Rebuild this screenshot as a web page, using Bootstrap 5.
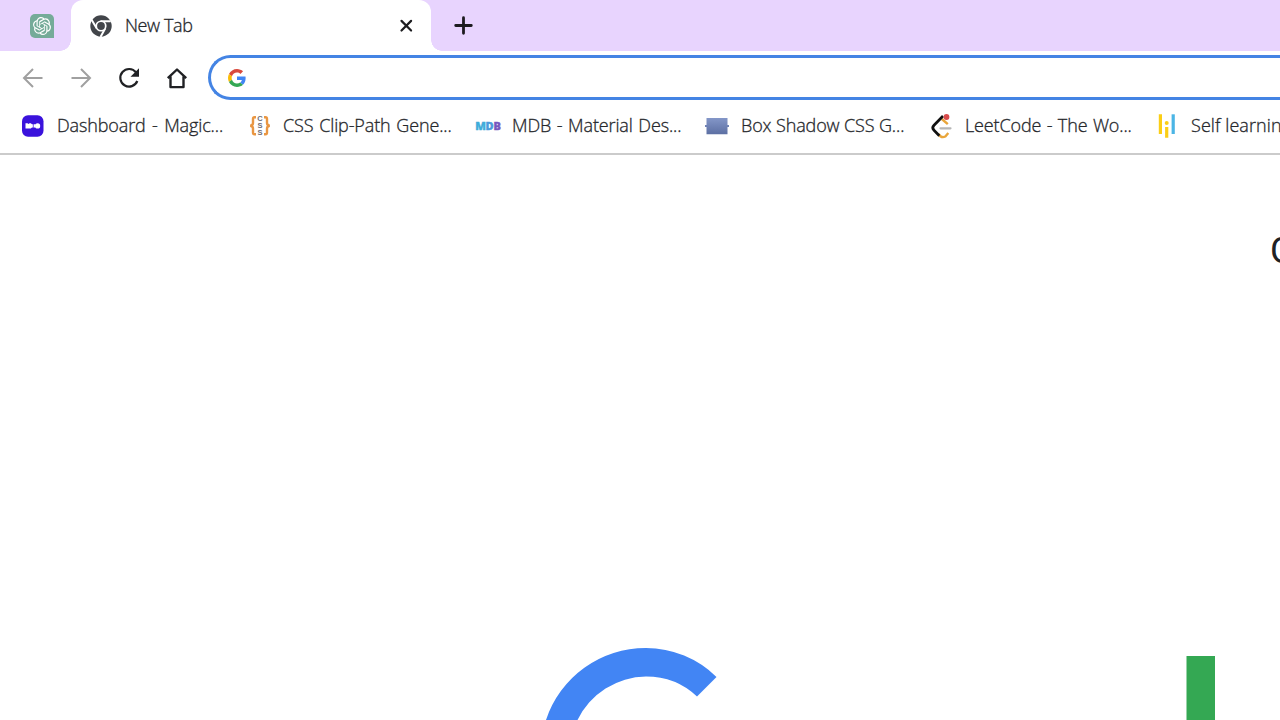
<!DOCTYPE html>
<html lang="en">
<head>
<meta charset="utf-8">
<meta name="viewport" content="width=device-width, initial-scale=1">
<title>New Tab</title>
<link href="https://cdn.jsdelivr.net/npm/bootstrap@5.3.0/dist/css/bootstrap.min.css" rel="stylesheet">
<style>
body{height:720px;font-family:"Open Sans","Noto Sans",sans-serif;font-size:18px;font-weight:300;color:#25272b;background:#fff}
svg{display:block;flex:none;overflow:visible}
.tabstrip{height:51px;background:#e8d4fe}
.pinned{width:71px;padding-left:30px}
.active-tab{width:360px;height:51px;background:#fff;border-radius:12px 12px 0 0;padding:0 18px 0 19px}
.active-tab::before,.active-tab::after{content:"";position:absolute;bottom:0;width:11px;height:11px}
.active-tab::before{left:-11px;background:radial-gradient(circle at 0 0,transparent 10.5px,#fff 11px)}
.active-tab::after{right:-11px;background:radial-gradient(circle at 100% 0,transparent 10.5px,#fff 11px)}
.tab-title{margin-left:13px;letter-spacing:-.4px;-webkit-text-stroke:.3px #25272b}
.toolbar{height:53px;padding-left:21px}
.tool{width:24px;height:24px;margin-right:24px}
.tool-last{margin-right:19px}
.omnibox{height:45px;border:3px solid #4484e4;border-right:0;border-radius:23px 0 0 23px;padding-left:17px}
.bookmarks{height:51px;padding:0 0 6px 22px;border-bottom:2px solid #cbcbcb}
.bm{flex:none}
.bm span{line-height:22px;padding-bottom:2px;letter-spacing:-.13px;-webkit-text-stroke:.3px #25272b}
.bm svg{margin-right:13px}
.b1{width:226px}.b2{width:229px}.b3{width:229px}.b4{width:224px}.b5{width:226px}
.b1 span{word-spacing:1.9px}.b2 span{word-spacing:1.2px}.b3 span{word-spacing:1.1px}.b4 span{word-spacing:0}.b5 span{word-spacing:.9px}
.b6 span{letter-spacing:.08px}
.mail{padding:72px 0 0 1270px;font:36px/48px Roboto,sans-serif;color:#202124;height:493px}
.logo{padding-left:541px}
</style>
</head>
<body class="overflow-hidden d-flex flex-column">
<header class="tabstrip d-flex align-items-center flex-shrink-0">
  <div class="pinned flex-shrink-0">
    <svg width="24" height="24" viewBox="0 0 24 24"><path d="M5 0h14a5 5 0 0 1 5 5v19H5a5 5 0 0 1-5-5V5a5 5 0 0 1 5-5Z" fill="#75ab99"/><path transform="translate(3 3) scale(.75)" fill="#fff" d="M22.2819 9.8211a5.9847 5.9847 0 0 0-.5157-4.9108 6.0462 6.0462 0 0 0-6.5098-2.9A6.0651 6.0651 0 0 0 4.9807 4.1818a5.9847 5.9847 0 0 0-3.9977 2.9 6.0462 6.0462 0 0 0 .7427 7.0966 5.98 5.98 0 0 0 .511 4.9107 6.051 6.051 0 0 0 6.5146 2.9001A5.9847 5.9847 0 0 0 13.2599 24a6.0557 6.0557 0 0 0 5.7718-4.2058 5.9894 5.9894 0 0 0 3.9977-2.9001 6.0557 6.0557 0 0 0-.7475-7.073zM13.2599 22.4292a4.4755 4.4755 0 0 1-2.8764-1.0408l.1419-.0804 4.7783-2.7582a.7948.7948 0 0 0 .3927-.6813v-6.7369l2.02 1.1686a.071.071 0 0 1 .038.052v5.5826a4.504 4.504 0 0 1-4.4945 4.4944zM3.5992 18.304a4.4708 4.4708 0 0 1-.5346-3.0137l.142.0852 4.783 2.7582a.7712.7712 0 0 0 .7806 0l5.8428-3.3685v2.3324a.0804.0804 0 0 1-.0332.0615L9.74 19.9502a4.4992 4.4992 0 0 1-6.1408-1.6464zM2.3408 7.8956a4.485 4.485 0 0 1 2.3655-1.9728V11.6a.7664.7664 0 0 0 .3879.6765l5.8144 3.3543-2.0201 1.1685a.0757.0757 0 0 1-.071 0l-4.8303-2.7865A4.504 4.504 0 0 1 2.3408 7.872zm16.5963 3.8558L13.1038 8.364 15.1192 7.2a.0757.0757 0 0 1 .071 0l4.8303 2.7913a4.4944 4.4944 0 0 1-.6765 8.1042v-5.6772a.79.79 0 0 0-.407-.667zm2.0107-3.0231l-.142-.0852-4.7735-2.7818a.7759.7759 0 0 0-.7854 0L9.409 9.2297V6.8974a.0662.0662 0 0 1 .0284-.0615l4.8303-2.7866a4.4992 4.4992 0 0 1 6.6802 4.66zM8.3065 12.863l-2.02-1.1638a.0804.0804 0 0 1-.038-.0567V6.0742a4.4992 4.4992 0 0 1 7.3757-3.4537l-.142.0805L8.704 5.459a.7948.7948 0 0 0-.3927.6813zm1.0976-2.3654l2.602-1.4998 2.6069 1.4998v2.9994l-2.5974 1.4997-2.6067-1.4997Z"/></svg>
  </div>
  <div class="active-tab position-relative d-flex align-items-center flex-shrink-0">
    <svg width="22" height="22" viewBox="0 0 22 22"><circle cx="11" cy="11" r="10.7" fill="#42454a"/><circle cx="11" cy="11" r="5.600" fill="#fff"/><path d="M10.500 6.300H20.800M6.800 13.500 1.600 4.700M15.300 13.300 10.500 22" stroke="#fff" stroke-width="2" fill="none"/><circle cx="11" cy="11" r="3.900" fill="#42454a"/></svg>
    <span class="tab-title">New Tab</span>
    <svg class="ms-auto" width="14" height="14" viewBox="0 0 14 14"><path d="m2.500 1.900 9.600 9.600m0-9.600-9.600 9.600" stroke="#1d1d20" stroke-width="2.200" stroke-linecap="round"/></svg>
  </div>
  <svg class="ms-4" width="18" height="18" viewBox="0 0 18 18"><path d="M8.500 .7v15.600M.7 8.500h15.600" stroke="#1d1b20" stroke-width="2.800" stroke-linecap="round"/></svg>
</header>
<nav class="toolbar d-flex align-items-center flex-shrink-0">
  <svg class="tool" viewBox="0 0 24 24"><path d="M21.500 12H3M12 3l-9 9 9 9" fill="none" stroke="#a0a0a0" stroke-width="2"/></svg>
  <svg class="tool" viewBox="0 0 24 24"><path d="M2.500 12H21M12 3l9 9-9 9" fill="none" stroke="#a0a0a0" stroke-width="2"/></svg>
  <svg class="tool" viewBox="0 0 24 24"><path d="M19 6.300A8.800 8.800 0 1 0 20.300 15" fill="none" stroke="#202124" stroke-width="2.200"/><path d="M22 2.300v8.500h-8.500Z" fill="#202124"/></svg>
  <svg class="tool tool-last" viewBox="0 0 24 24"><path d="M2.800 12.200 12 3.500l9.200 8.700M5.500 10.500v10.600h13V10.500" fill="none" stroke="#202124" stroke-width="2.400" stroke-linejoin="round"/></svg>
  <div class="omnibox d-flex align-items-center flex-grow-1">
    <svg width="18" height="18" viewBox="0 0 48 48"><path fill="#d94a3d" d="M24 9.5c3.54 0 6.71 1.22 9.21 3.6l6.85-6.85C35.9 2.38 30.47 0 24 0 14.62 0 6.51 5.38 2.56 13.22l7.98 6.19C12.43 13.72 17.74 9.5 24 9.5z"/><path fill="#4285f4" d="M46.98 24.55c0-1.57-.15-3.09-.38-4.55H24v9.02h12.94c-.58 2.96-2.26 5.48-4.78 7.18l7.73 6c4.51-4.18 7.09-10.36 7.09-17.65z"/><path fill="#fbbc05" d="M10.53 28.59A14.5 14.5 0 0 1 9.77 24c0-1.6.27-3.14.76-4.59l-7.98-6.19A24 24 0 0 0 0 24c0 3.88.92 7.54 2.56 10.78z"/><path fill="#34a853" d="M24 48c6.48 0 11.93-2.13 15.89-5.81l-7.73-6c-2.15 1.45-4.92 2.3-8.16 2.3-6.26 0-11.57-4.22-13.47-9.91l-7.98 6.19C6.51 42.62 14.62 48 24 48z"/></svg>
  </div>
</nav>
<div class="bookmarks d-flex align-items-center flex-shrink-0">
  <div class="bm b1 d-flex align-items-center"><svg width="22" height="22" viewBox="0 0 22 22"><rect y=".3" width="21.500" height="21.500" rx="6" fill="#3a12dc"/><path d="M3.500 8.200h2l1 .7 1-.7h1.300l1.200 1h3.500v3.300h-3.500l-1.200 1H3.500Z" fill="#fff"/><circle cx="15.600" cy="10.900" r="2.600" fill="#fff"/><path d="M11.300 9v3.800" stroke="#3a12dc" stroke-width=".7"/></svg><span>Dashboard - Magic...</span></div>
  <div class="bm b2 d-flex align-items-center"><svg width="22" height="22" viewBox="0 0 22 22"><path d="M8 2.300H6.500Q5 2.300 5 4v4q0 2.300-2.700 2.800Q5 11.300 5 13.500v4q0 1.800 1.500 1.800H8M16 2.300h1.500Q19 2.300 19 4v4q0 2.300 2.700 2.800Q19 11.300 19 13.500v4q0 1.800-1.500 1.800H16" fill="none" stroke="#e99642" stroke-width="2.400"/><g font-family="Liberation Sans,sans-serif" font-size="7.500" font-weight="700" fill="#6d6d75" text-anchor="middle"><text x="12" y="6.200">C</text><text x="12" y="13.300">S</text><text x="12" y="20.300">S</text></g></svg><span>CSS Clip-Path Gene...</span></div>
  <div class="bm b3 d-flex align-items-center"><svg width="22" height="22" viewBox="0 0 22 22"><g font-family="Open Sans,sans-serif" font-size="11" font-weight="800" stroke-width=".4"><text x="-1.800" y="15" fill="#3fadda" stroke="#3fadda" textLength="10">M</text><text x="8.400" y="15" fill="#4b9bdc" stroke="#4b9bdc">D</text><text x="16.400" y="15" fill="#7657be" stroke="#7657be">B</text></g></svg><span>MDB - Material Des...</span></div>
  <div class="bm b4 d-flex align-items-center"><svg width="22" height="22" viewBox="0 0 22 22"><defs><linearGradient id="shade" x2="0" y2="1"><stop stop-color="#8497c8"/><stop offset="1" stop-color="#5c6fa3"/></linearGradient></defs><path d="M1 3h20.500v7H23v2h-1.500v7.200H.5V12h-1.500v-2H.5V3Z" fill="url(#shade)"/></svg><span>Box Shadow CSS G...</span></div>
  <div class="bm b5 d-flex align-items-center"><svg width="22" height="22" viewBox="0 0 22 22"><path d="m11.800 4 6 5.200M8.500 19q2.800 4.500 6.800 2.500l3-3.500" fill="none" stroke="#e9a63b" stroke-width="2.400"/><path d="M13 1 4 10.300q-2.500 2.500 0 5l5.300 5.400" fill="none" stroke="#111" stroke-width="2.700"/><path d="M10.500 13.300h10" stroke="#b6b6b6" stroke-width="2.200" stroke-linecap="round"/><circle cx="16.500" cy="2" r="2.900" fill="#d84b4b"/></svg><span>LeetCode - The Wo...</span></div>
  <div class="bm b6 d-flex align-items-center"><svg width="22" height="22" viewBox="0 0 22 22"><path d="M4.400-.7v19.700M10.700 12v10.800" stroke="#fbce16" stroke-width="3.200"/><circle cx="10.700" cy="8" r="2" fill="#fbce16"/><path d="M17.200-.7v19.700" stroke="#4bb5e5" stroke-width="3.200"/></svg><span class="text-nowrap">Self learning</span></div>
</div>
<main class="overflow-hidden flex-grow-1">
  <div class="mail">Gmail</div>
  <svg class="logo" width="1280" height="72" viewBox="541 648 739 72" preserveAspectRatio="xMinYMin"><path d="M716.500 677A101 101 0 0 0 646 648A105 105 0 0 0 546 720H577.500A77 77 0 0 1 646 676.500Q676 676.500 697 696.500Z" fill="#4285f4"/><path d="M1186.500 656H1215v64h-28.500Z" fill="#34a853"/></svg>
</main>
<script src="https://cdn.jsdelivr.net/npm/bootstrap@5.3.0/dist/js/bootstrap.bundle.min.js"></script>
</body>
</html>
